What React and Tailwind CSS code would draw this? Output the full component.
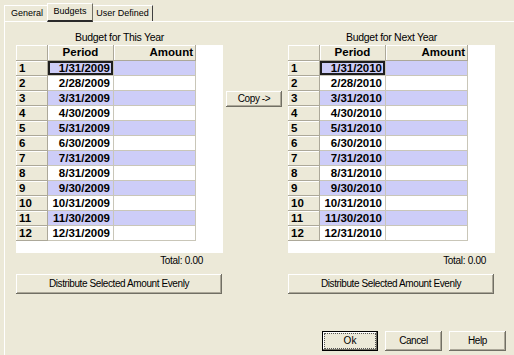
import React from "react";

const font = { fontFamily: '"Liberation Sans", Arial, sans-serif' };

const raised =
  "bg-[#ece9d8] shadow-[inset_-1px_-1px_0_#716f64,inset_1px_1px_0_#ffffff,inset_-2px_-2px_0_#aca899]";

function Btn({ className = "", children }) {
  return (
    <button className={`${raised} h-[20px] text-[10px] tracking-[-0.4px] leading-[12px] text-black flex items-center justify-center ${className}`}>
      {children}
    </button>
  );
}

function Grid({ title, year, totalPad }) {
  const rows = [
    "1/31", "2/28", "3/31", "4/30", "5/31", "6/30",
    "7/31", "8/31", "9/30", "10/31", "11/30", "12/31",
  ];
  return (
    <div className="flex flex-col w-[207px]">
      <div className="h-[23px] pt-[9px] text-center text-[10.5px] tracking-[-0.3px] leading-[12px]">{title}</div>
      <div className="h-[208px] bg-white">
        <div className="flex h-[16px] text-[11.5px] font-bold leading-[15px]">
          <div className="w-[32px] bg-[#ece9d8] border-r border-b border-[#aca899] shadow-[inset_1px_1px_0_#ffffff]" />
          <div className="w-[66px] bg-[#ece9d8] border-r border-b border-[#aca899] shadow-[inset_1px_1px_0_#ffffff] text-center">Period</div>
          <div className="w-[82px] bg-[#ece9d8] border-r border-b border-[#aca899] shadow-[inset_1px_1px_0_#ffffff] text-right pr-[2px]">Amount</div>
        </div>
        {rows.map((r, i) => {
          const hl = i % 2 === 0;
          const bg = hl ? "bg-[#cdcdf8]" : "bg-white";
          return (
            <div key={r} className="flex h-[15px] text-[11.5px] font-bold leading-[14px]">
              <div className="w-[32px] bg-[#ece9d8] border-r border-b border-[#aca899] shadow-[inset_1px_1px_0_#ffffff] pl-[3px]">
                {i + 1}
              </div>
              <div
                className={`w-[66px] ${bg} border-r border-b border-[#c9c6b8] text-right pr-[3px] ${
                  i === 0 ? "shadow-[inset_0_0_0_2px_#1f1f1f]" : ""
                }`}
              >
                {r}/{year}
              </div>
              <div className={`w-[82px] ${bg} border-r border-b border-[#c9c6b8]`} />
            </div>
          );
        })}
      </div>
      <div className="h-[21px] pt-[2px] text-right text-[10px] tracking-[-0.3px] leading-[12px]" style={{ paddingRight: totalPad }}>
        Total: 0.00
      </div>
      <Btn className="w-[206px]">Distribute Selected Amount Evenly</Btn>
    </div>
  );
}

export default function App() {
  return (
    <div className="w-[514px] h-[355px] bg-[#ece9d8] text-black overflow-hidden" style={font}>
      {/* Tabs */}
      <div className="flex items-end h-[21px] pl-[4px]">
        <div className="h-[16px] w-[43px] border-l border-t border-white text-[9px] leading-[14px] text-center pl-[2px]">
          General
        </div>
        <div className="relative z-10 h-[19px] w-[46px] -mb-px border-l border-t border-white border-r border-r-[#716f64] border-b-2 border-b-[#2a2a2a] bg-[#ece9d8] text-[9px] leading-[14px] text-center">
          Budgets
        </div>
        <div className="h-[16px] w-[60px] border-t border-white border-r border-r-[#404040] text-[9px] leading-[14px] text-center">
          User Defined
        </div>
      </div>

      {/* Panel */}
      <div className="ml-[4px] h-[334px] border-l border-t border-white pl-[11px] flex flex-col">
        <div className="flex">
          <Grid title="Budget for This Year" year="2009" totalPad={20} />
          <div className="w-[65px] pl-[3px] pt-[69px]">
            <Btn className="w-[56px] !h-[16px]">Copy -&gt;</Btn>
          </div>
          <Grid title="Budget for Next Year" year="2010" totalPad={9} />
        </div>
        <div className="flex justify-end gap-[7px] pr-[8px] mt-[37px]">
          <button className="w-[56px] h-[20px] border border-black bg-[#ece9d8] p-[1px] shadow-[inset_-1px_-1px_0_#716f64,inset_1px_1px_0_#ffffff]">
            <span className="flex items-center justify-center w-full h-full border border-dotted border-[#555] text-[10px] leading-[12px]">
              Ok
            </span>
          </button>
          <Btn className="w-[57px]">Cancel</Btn>
          <Btn className="w-[57px]">Help</Btn>
        </div>
      </div>
    </div>
  );
}
